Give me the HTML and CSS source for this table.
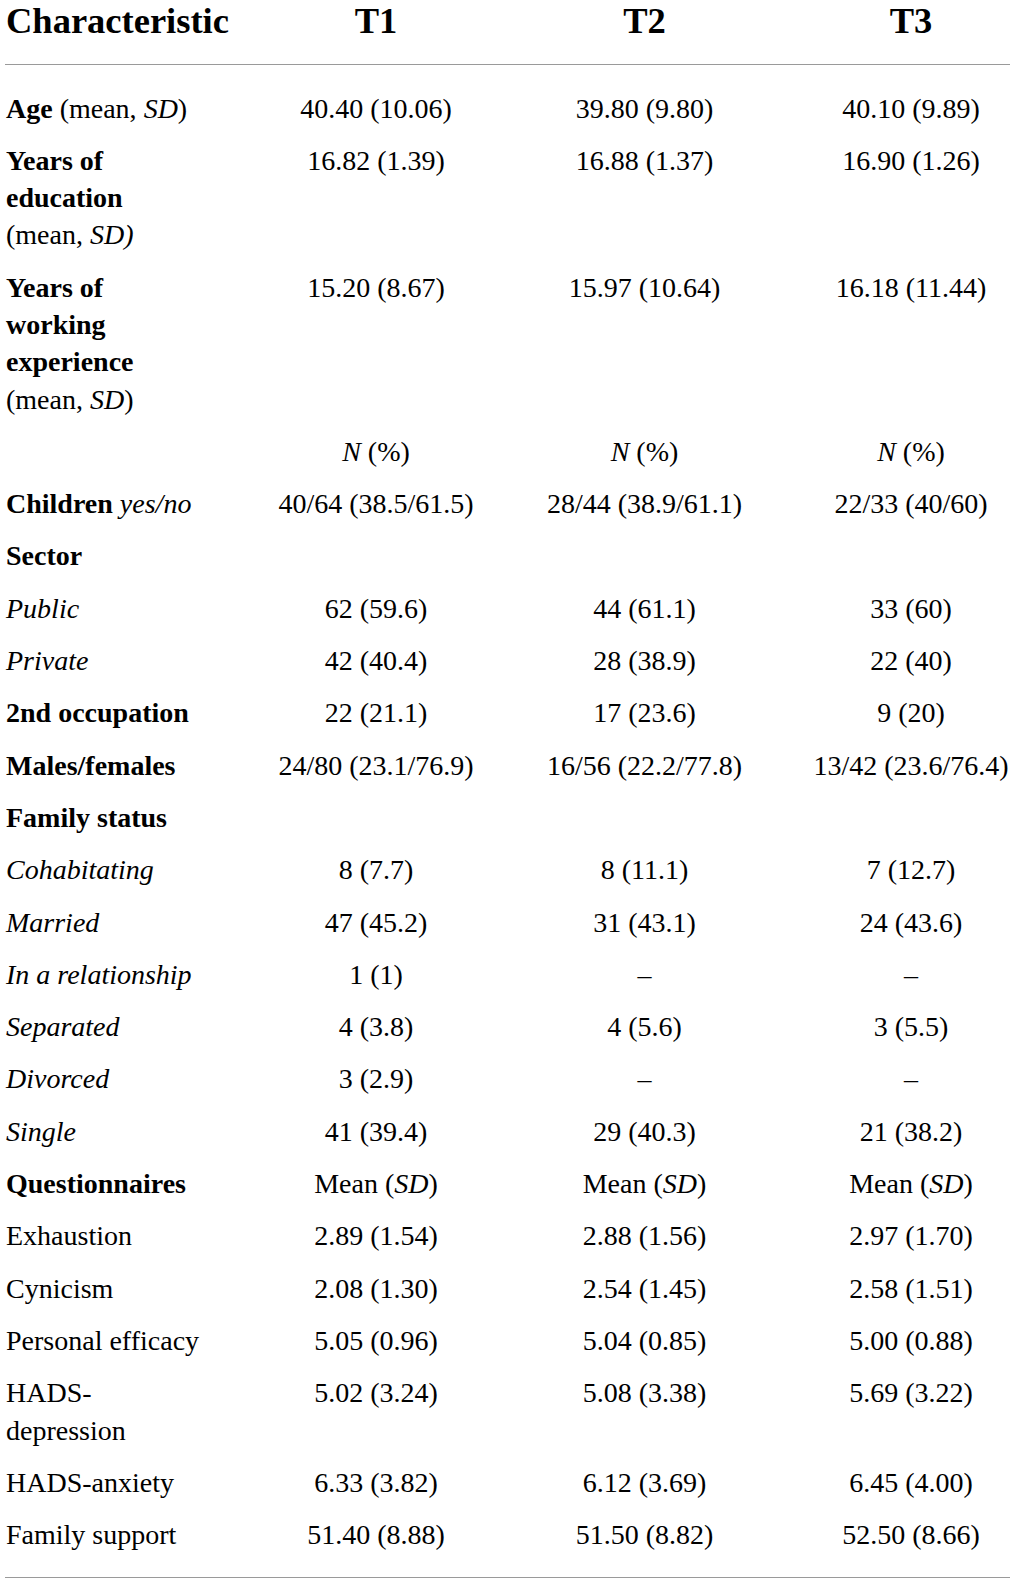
FILE: index.html
```html
<!DOCTYPE html>
<html lang="en">
<head>
<meta charset="utf-8">
<title>Characteristics T1 T2 T3</title>
<link rel="stylesheet" href="styles.css">
</head>
<body>
<table class="stats">
  <colgroup>
    <col class="c-label">
    <col class="c-t1">
    <col class="c-t2">
    <col class="c-t3">
  </colgroup>
  <thead>
    <tr>
      <th class="lbl">Characteristic</th>
      <th>T1</th>
      <th>T2</th>
      <th class="last">T3</th>
    </tr>
  </thead>
  <tbody>
    <tr class="first">
      <td class="lbl"><b>Age</b> (mean, <i>SD</i>)</td>
      <td>40.40 (10.06)</td><td>39.80 (9.80)</td><td class="last">40.10 (9.89)</td>
    </tr>
    <tr>
      <td class="lbl"><b>Years of</b><br><b>education</b><br>(mean, <i>SD)</i></td>
      <td>16.82 (1.39)</td><td>16.88 (1.37)</td><td class="last">16.90 (1.26)</td>
    </tr>
    <tr>
      <td class="lbl"><b>Years of</b><br><b>working</b><br><b>experience</b><br>(mean, <i>SD</i>)</td>
      <td>15.20 (8.67)</td><td>15.97 (10.64)</td><td class="last">16.18 (11.44)</td>
    </tr>
    <tr>
      <td class="lbl"></td>
      <td><i>N</i> (%)</td><td><i>N</i> (%)</td><td class="last"><i>N</i> (%)</td>
    </tr>
    <tr>
      <td class="lbl"><b>Children</b> <i>yes/no</i></td>
      <td>40/64 (38.5/61.5)</td><td>28/44 (38.9/61.1)</td><td class="last">22/33 (40/60)</td>
    </tr>
    <tr>
      <td class="lbl"><b>Sector</b></td>
      <td></td><td></td><td class="last"></td>
    </tr>
    <tr>
      <td class="lbl"><i>Public</i></td>
      <td>62 (59.6)</td><td>44 (61.1)</td><td class="last">33 (60)</td>
    </tr>
    <tr>
      <td class="lbl"><i>Private</i></td>
      <td>42 (40.4)</td><td>28 (38.9)</td><td class="last">22 (40)</td>
    </tr>
    <tr>
      <td class="lbl"><b>2nd occupation</b></td>
      <td>22 (21.1)</td><td>17 (23.6)</td><td class="last">9 (20)</td>
    </tr>
    <tr>
      <td class="lbl"><b>Males/females</b></td>
      <td>24/80 (23.1/76.9)</td><td>16/56 (22.2/77.8)</td><td class="last">13/42 (23.6/76.4)</td>
    </tr>
    <tr>
      <td class="lbl"><b>Family status</b></td>
      <td></td><td></td><td class="last"></td>
    </tr>
    <tr>
      <td class="lbl"><i>Cohabitating</i></td>
      <td>8 (7.7)</td><td>8 (11.1)</td><td class="last">7 (12.7)</td>
    </tr>
    <tr>
      <td class="lbl"><i>Married</i></td>
      <td>47 (45.2)</td><td>31 (43.1)</td><td class="last">24 (43.6)</td>
    </tr>
    <tr>
      <td class="lbl"><i>In a relationship</i></td>
      <td>1 (1)</td><td>–</td><td class="last">–</td>
    </tr>
    <tr>
      <td class="lbl"><i>Separated</i></td>
      <td>4 (3.8)</td><td>4 (5.6)</td><td class="last">3 (5.5)</td>
    </tr>
    <tr>
      <td class="lbl"><i>Divorced</i></td>
      <td>3 (2.9)</td><td>–</td><td class="last">–</td>
    </tr>
    <tr>
      <td class="lbl"><i>Single</i></td>
      <td>41 (39.4)</td><td>29 (40.3)</td><td class="last">21 (38.2)</td>
    </tr>
    <tr>
      <td class="lbl"><b>Questionnaires</b></td>
      <td>Mean (<i>SD</i>)</td><td>Mean (<i>SD</i>)</td><td class="last">Mean (<i>SD</i>)</td>
    </tr>
    <tr>
      <td class="lbl">Exhaustion</td>
      <td>2.89 (1.54)</td><td>2.88 (1.56)</td><td class="last">2.97 (1.70)</td>
    </tr>
    <tr>
      <td class="lbl">Cynicism</td>
      <td>2.08 (1.30)</td><td>2.54 (1.45)</td><td class="last">2.58 (1.51)</td>
    </tr>
    <tr>
      <td class="lbl">Personal efficacy</td>
      <td>5.05 (0.96)</td><td>5.04 (0.85)</td><td class="last">5.00 (0.88)</td>
    </tr>
    <tr>
      <td class="lbl">HADS-<br>depression</td>
      <td>5.02 (3.24)</td><td>5.08 (3.38)</td><td class="last">5.69 (3.22)</td>
    </tr>
    <tr>
      <td class="lbl">HADS-anxiety</td>
      <td>6.33 (3.82)</td><td>6.12 (3.69)</td><td class="last">6.45 (4.00)</td>
    </tr>
    <tr class="final">
      <td class="lbl">Family support</td>
      <td>51.40 (8.88)</td><td>51.50 (8.82)</td><td class="last">52.50 (8.66)</td>
    </tr>
  </tbody>
</table>
</body>
</html>
```

FILE: styles.css
```css
html, body {
  margin: 0;
  padding: 0;
  background: #ffffff;
}

body {
  font-family: "Liberation Serif", "Times New Roman", serif;
  color: #000000;
}

.stats {
  margin-left: 5px;
  width: 1005px;
  border-collapse: collapse;
  table-layout: fixed;
  border-bottom: 1px solid #9a9a9a;
}

.c-label { width: 237px; }
.c-t1 { width: 268px; }
.c-t2 { width: 269px; }
.c-t3 { width: 231px; }

.stats th {
  font-size: 36.5px;
  font-weight: bold;
  line-height: 40px;
  padding: 1px 0 23px 0;
  text-align: center;
  border-bottom: 1px solid #9a9a9a;
  vertical-align: top;
}

.stats td {
  font-size: 28px;
  line-height: 37.3px;
  padding: 7.5px 0;
  text-align: center;
  vertical-align: top;
  white-space: nowrap;
}

.stats th.lbl,
.stats td.lbl {
  text-align: left;
  padding-left: 1px;
}

.stats th.last,
.stats td.last {
  padding-left: 33px;
}

.stats tr.first td {
  padding-top: 24.5px;
}

.stats tr.final td {
  padding-bottom: 23.5px;
}
```
